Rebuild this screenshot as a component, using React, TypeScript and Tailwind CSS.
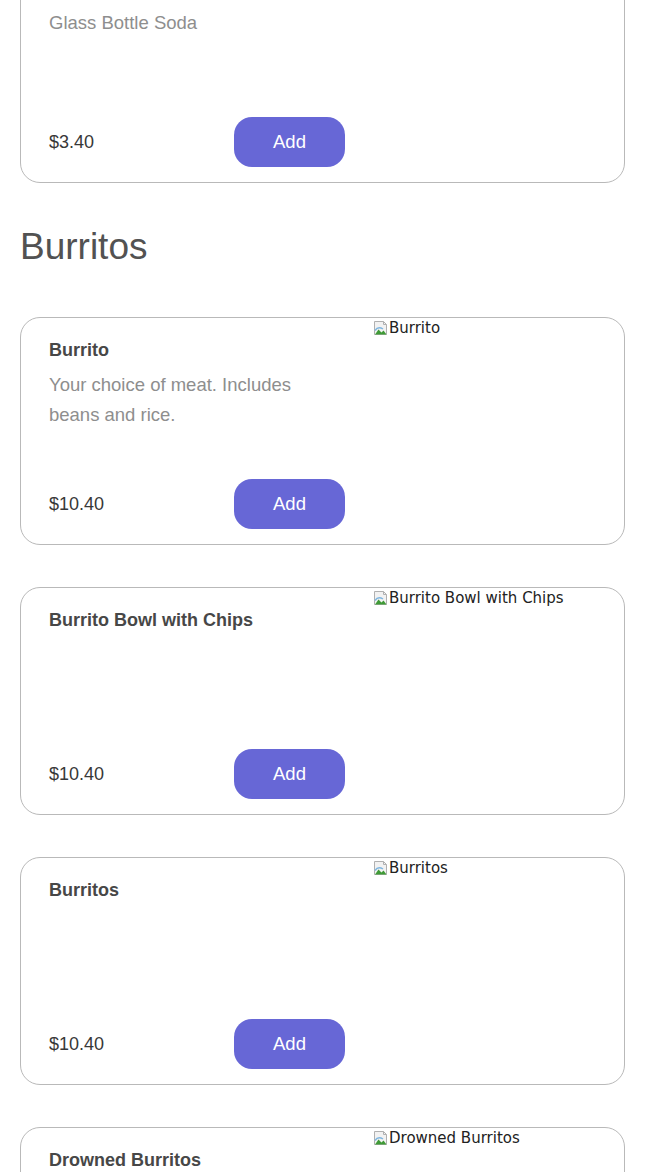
import React from "react";

type Item = { name: string; desc?: string; price: string };

const BrokenImg = ({ alt }: { alt: string }) => (
  <div className="flex items-start text-[15px] leading-[20px] text-[#222]" style={{ fontFamily: '"DejaVu Sans", sans-serif' }}>
    <svg width="16" height="16" viewBox="0 0 16 16" className="mt-[2px] shrink-0">
      <path d="M1.5 1.5h9l3 3v10h-12z" fill="#f2f2f2" stroke="#b0b0b0" />
      <path d="M10.5 1.5v3h3" fill="none" stroke="#b0b0b0" />
      <path d="M2 14.5l3.5-5 3 3 2-2 3 4z" fill="#3f9a36" />
      <path d="M2 10.5c2-3 5-3.5 8-1.5" fill="none" stroke="#7fb6e0" strokeWidth="1.5" />
    </svg>
    <span>{alt}</span>
  </div>
);

const Card = ({ item, img }: { item: Item; img?: string }) => (
  <div className="flex h-[228px] rounded-[20px] border border-[#b9b9b9] bg-white">
    <div className="flex w-[352px] shrink-0 flex-col justify-between pl-[28px] pr-[28px] pt-[20px] pb-[15px]">
      <div>
        <div className="text-[18px] font-bold leading-[24px] text-[#474747]">{item.name}</div>
        {item.desc && (
          <div className="mt-[8px] w-[270px] text-[18.5px] leading-[30px] text-[#8e8e8e]">{item.desc}</div>
        )}
      </div>
      <div className="flex items-center justify-between">
        <div className="text-[18px] leading-[24px] text-[#383838]">{item.price}</div>
        <button className="h-[50px] w-[111px] rounded-[18px] bg-[#6767d6] text-[18.5px] font-light text-white">
          Add
        </button>
      </div>
    </div>
    <div className="flex-1">{img && <BrokenImg alt={img} />}</div>
  </div>
);

export default function App() {
  return (
    <div className="min-h-[1172px] bg-white" style={{ fontFamily: '"Liberation Sans", Arial, sans-serif' }}>
      <div className="mx-[20px] -mt-[45px] w-[605px]">
        <Card item={{ name: "Mexican Coke", desc: "Glass Bottle Soda", price: "$3.40" }} />
        <h2 className="mt-[44px] mb-[50px] text-[37px] leading-[40px] font-medium text-[#525252]">Burritos</h2>
        <div className="flex flex-col gap-[42px]">
          <Card item={{ name: "Burrito", desc: "Your choice of meat. Includes beans and rice.", price: "$10.40" }} img="Burrito" />
          <Card item={{ name: "Burrito Bowl with Chips", price: "$10.40" }} img="Burrito Bowl with Chips" />
          <Card item={{ name: "Burritos", price: "$10.40" }} img="Burritos" />
          <Card item={{ name: "Drowned Burritos", price: "$10.40" }} img="Drowned Burritos" />
        </div>
      </div>
    </div>
  );
}
